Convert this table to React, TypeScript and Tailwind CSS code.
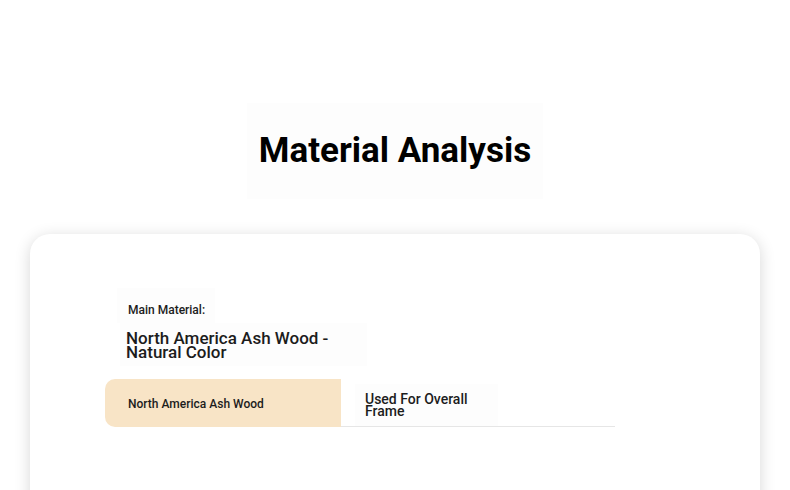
import React from "react";

const rows = [
  { name: "North America Ash Wood", use: "Used For Overall Frame" },
];

export default function App() {
  return (
    <div className="min-h-screen bg-white font-['Roboto',sans-serif] text-[#1c1c1c] overflow-hidden">
      <div className="pt-[103px] flex justify-center">
        <div className="bg-[#fdfdfd] px-[12px] py-[30px]">
          <h1 className="text-[35px] leading-[36px] font-bold text-black">
            Material Analysis
          </h1>
        </div>
      </div>

      <div className="mx-[30px] mt-[35px] h-[300px] bg-white rounded-[20px] shadow-[0_3px_16px_rgba(0,0,0,0.16)] pt-[54px] px-[75px]">
        <div className="ml-[12px] inline-block bg-[#fdfdfd] pl-[11px] pr-[10px] pt-[16px] pb-[7px]">
          <p className="text-[12px] leading-[12px] font-medium">Main Material:</p>
        </div>
        <div className="ml-[15px] w-[247px] bg-[#fdfdfd] px-[6px] pt-[8px] pb-[7px]">
          <h2 className="text-[17px] leading-[14px] font-medium">
            North America Ash Wood - Natural Color
          </h2>
        </div>

        <div className="mt-[13px] w-[510px]">
          {rows.map((row) => (
            <div key={row.name} className="flex h-[48px]">
              <div className="w-[236px] bg-[#f8e4c6] rounded-l-[10px] flex items-center pl-[23px] pt-[2px]">
                <span className="text-[12px] leading-[12px] font-medium">{row.name}</span>
              </div>
              <div className="flex-1 border-b border-[#e6e6e6] flex items-center pl-[14px] pt-[4px]">
                <div className="w-[143px] bg-[#fdfdfd] px-[10px] py-[9px]">
                  <span className="block text-[14px] leading-[12px] font-medium">{row.use}</span>
                </div>
              </div>
            </div>
          ))}
        </div>
      </div>
    </div>
  );
}
